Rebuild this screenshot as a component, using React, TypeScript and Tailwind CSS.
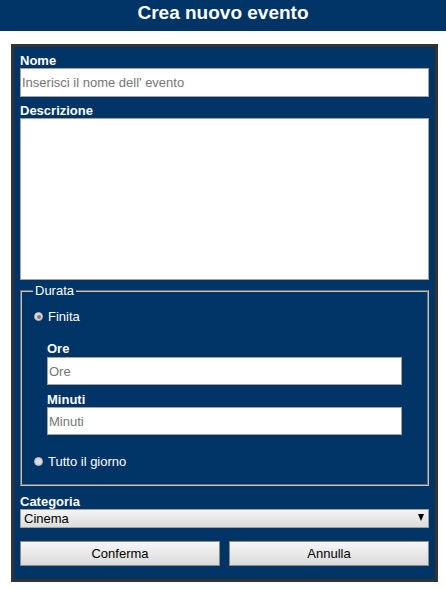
import { useState } from 'react'

function Radio({ checked, label, onClick }: { checked: boolean; label: string; onClick: () => void }) {
  return (
    <label onClick={onClick} className="flex h-[15px] items-center gap-[5px] cursor-pointer">
      <span className="flex h-[9px] w-[9px] items-center justify-center rounded-full border border-[#b4b4b4] bg-[#dcdcdc]">
        {checked && <span className="h-[4px] w-[4px] rounded-full bg-[#7a7a7a]" />}
      </span>
      <span className="text-[13px] leading-[15px] text-white">{label}</span>
    </label>
  )
}

const fieldLabel = 'block text-[13px] font-bold leading-[15px] text-white'
const textInput =
  'block w-full border border-[#a3a3a3] bg-white pl-[1px] text-[13px] text-black outline-none placeholder:text-[#757575]'
const button =
  'h-[25px] flex-1 border border-[#8a8a8a] bg-gradient-to-b from-[#f7f7f7] to-[#dadada] text-[13px] text-black'

export default function App() {
  const [durata, setDurata] = useState<'finita' | 'giorno'>('finita')

  return (
    <div className="min-h-[590px] bg-white font-['Liberation_Sans',Arial,sans-serif]">
      <header className="h-[31px] bg-[#003366] text-center text-[19px] font-bold leading-[26px] text-white">
        Crea nuovo evento
      </header>

      <form className="ml-[11px] mt-[13px] w-[427px] border-[3px] border-[#333333] bg-[#003366] px-[6px] pb-[13px] pt-[6px]">
        <label className={fieldLabel}>Nome</label>
        <input className={`${textInput} h-[29px]`} placeholder="Inserisci il nome dell' evento" />

        <label className={`${fieldLabel} mt-[6px]`}>Descrizione</label>
        <textarea className={`${textInput} h-[162px] resize-none`} />

        <fieldset className="mt-[3px] border-2 border-[#c4c4c4] pb-[15px] [border-style:groove]">
          <legend className="ml-[11px] px-[2px] text-[13px] leading-[15px] text-white">Durata</legend>

          <div className="mt-[11px] pl-[12px]">
            <Radio checked={durata === 'finita'} label="Finita" onClick={() => setDurata('finita')} />
          </div>

          <div className="mt-[17px] px-[25px]">
            <label className={fieldLabel}>Ore</label>
            <input className={`${textInput} mt-[1px] h-[28px]`} placeholder="Ore" />
            <label className={`${fieldLabel} mt-[7px]`}>Minuti</label>
            <input className={`${textInput} h-[28px]`} placeholder="Minuti" />
          </div>

          <div className="mt-[19px] pl-[12px]">
            <Radio checked={durata === 'giorno'} label="Tutto il giorno" onClick={() => setDurata('giorno')} />
          </div>
        </fieldset>

        <label className={`${fieldLabel} mt-[8px]`}>Categoria</label>
        <div className="relative">
          <select className="block h-[19px] w-full appearance-none border border-[#a0a0a0] bg-gradient-to-b from-[#f4f4f4] to-[#dcdcdc] pl-[3px] text-[13px] leading-[17px] text-black outline-none">
            <option>Cinema</option>
            <option>Teatro</option>
            <option>Musica</option>
          </select>
          <span className="pointer-events-none absolute right-[5px] top-[5px] h-0 w-0 border-x-[3.5px] border-t-[7px] border-x-transparent border-t-black" />
        </div>

        <div className="mt-[13px] flex gap-[9px]">
          <button type="button" className={button}>Conferma</button>
          <button type="button" className={button}>Annulla</button>
        </div>
      </form>
    </div>
  )
}
